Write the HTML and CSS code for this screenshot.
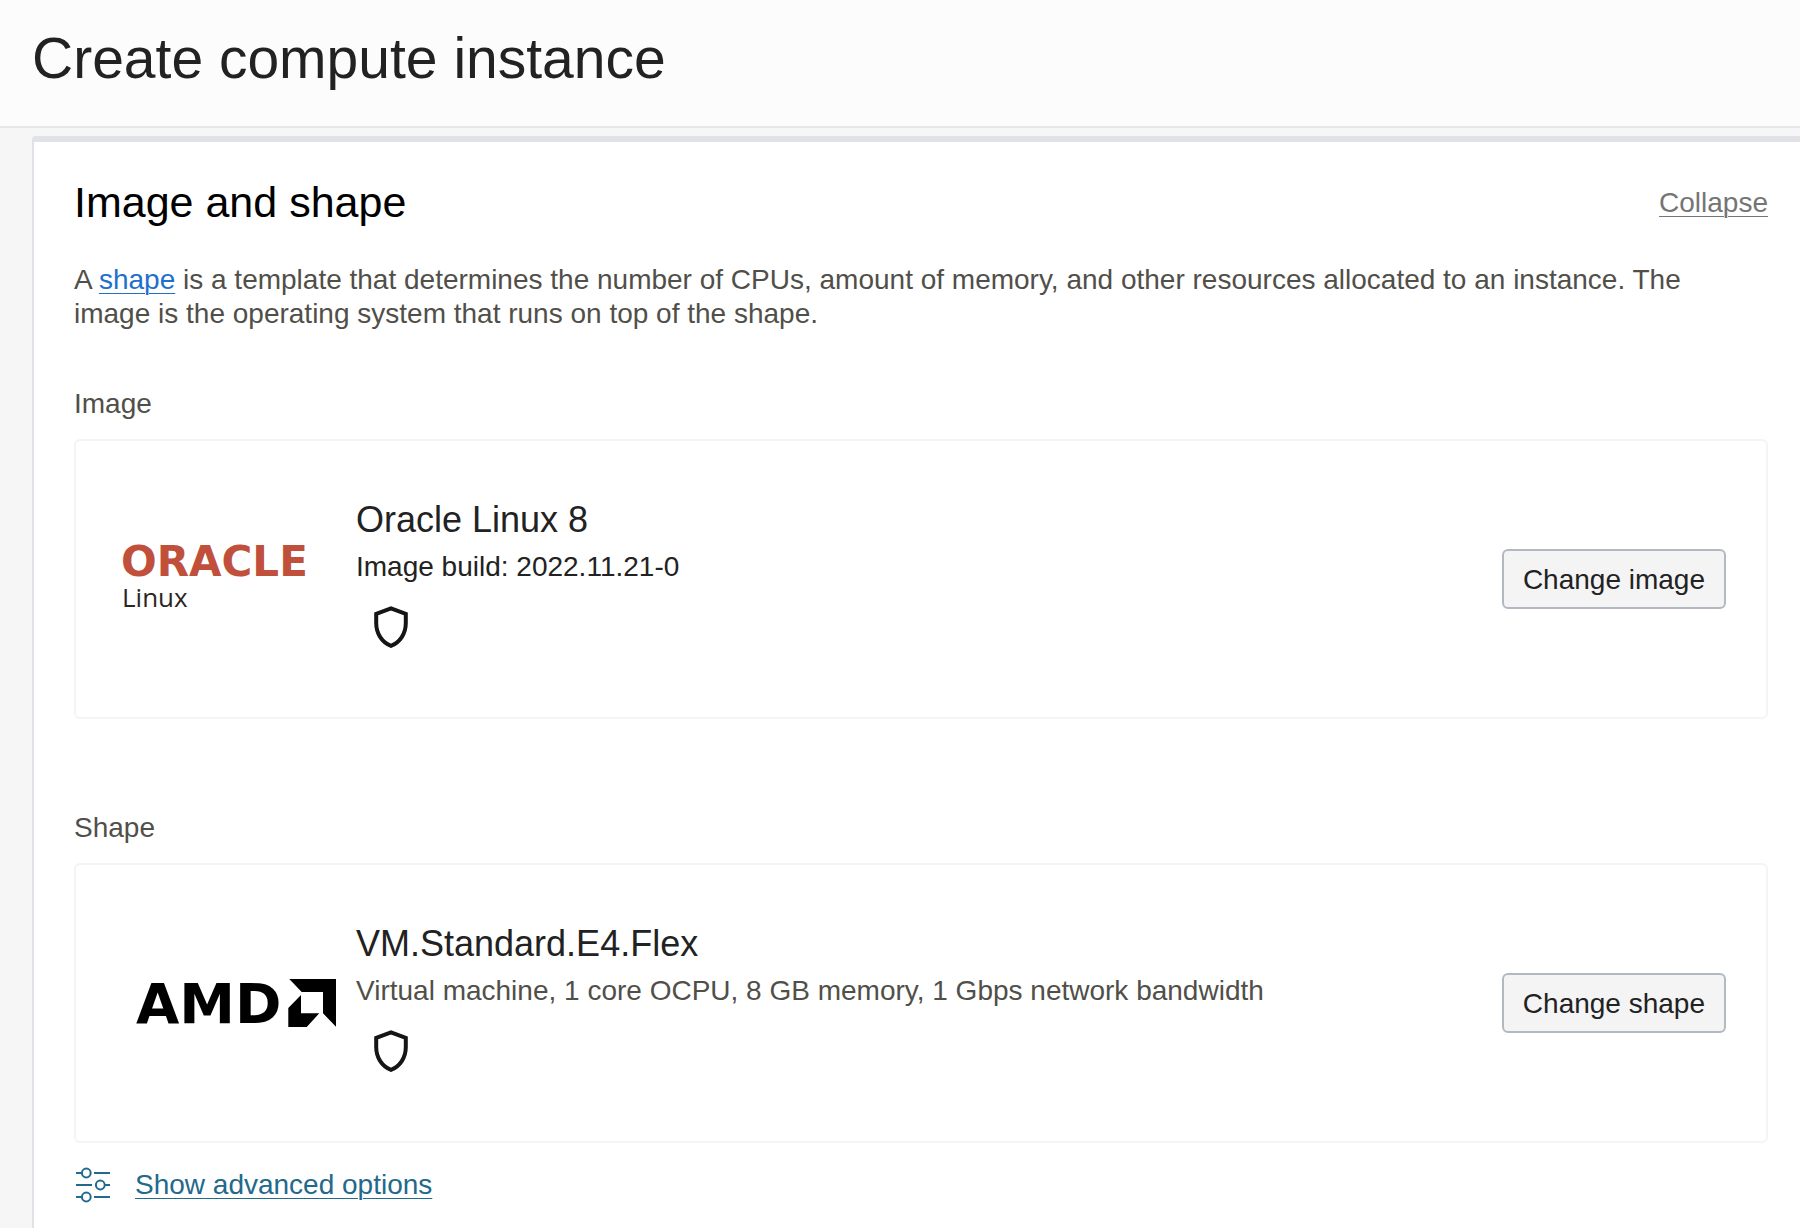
FILE: index.html
```html
<!DOCTYPE html>
<html lang="en">
<head>
<meta charset="utf-8">
<meta name="viewport" content="width=device-width, initial-scale=1">
<title>Create compute instance</title>
<link rel="stylesheet" href="styles.css">
</head>
<body>
<header class="page-header">
  <h1 class="page-title">Create compute instance</h1>
</header>
<main class="page-body">
  <section class="panel">
    <div class="panel-head">
      <h2 class="panel-title">Image and shape</h2>
      <a class="collapse-link" href="#">Collapse</a>
    </div>
    <p class="panel-text">A <a class="text-link" href="#">shape</a> is a template that determines the number of CPUs, amount of memory, and other resources allocated to an instance. The image is the operating system that runs on top of the shape.</p>

    <section class="choice">
      <h3 class="choice-label">Image</h3>
      <div class="card">
        <div class="card-logo">
          <svg class="oracle-logo" viewBox="0 0 190 58" role="img" aria-label="Oracle Linux">
            <text class="oracle-word" x="-2" y="26">ORACLE</text>
            <text class="linux-word" x="-1" y="57">Linux</text>
          </svg>
        </div>
        <div class="card-details">
          <h4 class="card-title">Oracle Linux 8</h4>
          <p class="card-text card-text-strong">Image build: 2022.11.21-0</p>
          <svg class="shield" viewBox="0 0 36 42" aria-hidden="true"><path d="M18 2.3 32.8 7.8V17C32.8 27.5 27 36.5 18 39.8 9 36.5 3.2 27.5 3.2 17V7.8Z"/></svg>
        </div>
        <button class="card-button" type="button">Change image</button>
      </div>
    </section>

    <section class="choice choice-next">
      <h3 class="choice-label">Shape</h3>
      <div class="card">
        <div class="card-logo">
          <svg class="amd-logo" viewBox="0 0 214 48" role="img" aria-label="AMD">
            <text class="amd-word" x="13" y="44">AMD</text>
            <path d="M166.3 0H213V47.7L200 34.3V13H178.7ZM165.3 29 178 16V34.3H196.3L183.7 48H165.3Z"/>
          </svg>
        </div>
        <div class="card-details">
          <h4 class="card-title">VM.Standard.E4.Flex</h4>
          <p class="card-text">Virtual machine, 1 core OCPU, 8 GB memory, 1 Gbps network bandwidth</p>
          <svg class="shield" viewBox="0 0 36 42" aria-hidden="true"><path d="M18 2.3 32.8 7.8V17C32.8 27.5 27 36.5 18 39.8 9 36.5 3.2 27.5 3.2 17V7.8Z"/></svg>
        </div>
        <button class="card-button" type="button">Change shape</button>
      </div>
    </section>

    <div class="advanced">
      <svg class="sliders" viewBox="0 0 36 38" aria-hidden="true">
        <path d="M2 7H8M20 7H36M2 19H18M31 19H36M2 31H8M20 31H36"/>
        <circle cx="12.3" cy="7" r="4.4"/><circle cx="26.3" cy="19" r="4.4"/><circle cx="12.3" cy="31" r="4.4"/>
      </svg>
      <a class="advanced-link" href="#">Show advanced options</a>
    </div>
  </section>
</main>
</body>
</html>
```
FILE: styles.css
```css
* { box-sizing: border-box; }

body {
  margin: 0;
  min-height: 100vh;
  display: flex;
  flex-direction: column;
  background: #f6f6f6;
  color: #222;
  font: 28px/34px "Liberation Sans", Arial, sans-serif;
}

h1, h2, h3, h4, p { margin: 0; font-weight: 400; }

.page-header {
  padding: 26px 32px 36px;
  border-bottom: 2px solid #e6e6e6;
  background: #fcfcfc;
}
.page-title { font-size: 57px; line-height: 64px; }

.page-body {
  flex: 1;
  display: flex;
  padding: 8px 0 0 32px;
}

.panel {
  flex: 1;
  min-width: 0;
  padding: 35px 32px 26px 40px;
  border-top: 6px solid #e1e2e7;
  border-left: 2px solid #e1e2e7;
  border-top-left-radius: 4px;
  background: #fff;
}
.panel-head {
  display: flex;
  align-items: center;
  justify-content: space-between;
}
.panel-title { color: #000; font-size: 43px; line-height: 50px; }
.collapse-link { padding-top: 2px; color: #757575; }
.panel-text {
  margin-top: 36px;
  padding-right: 40px;
  color: #514f49;
}
.text-link { color: #1f70cc; }
a { text-decoration-thickness: 1px; text-underline-offset: 4px; }

.choice { margin-top: 56px; }
.choice-next { margin-top: 92px; }
.choice-label { color: #514f49; font-size: 28px; }

.card {
  display: grid;
  grid-template-columns: 233px 1fr auto;
  align-items: center;
  min-height: 280px;
  margin-top: 18px;
  padding: 0 40px 0 47px;
  border: 2px solid #f4f4f4;
  border-radius: 6px;
}
.card-logo svg { display: block; overflow: visible; }
.oracle-logo { width: 190px; height: 58px; }
.oracle-word { fill: #c0503c; font: 700 42px "DejaVu Sans", sans-serif; }
.linux-word { fill: #2a2624; font: 26px "Open Sans", sans-serif; }
.amd-logo { width: 214px; height: 48px; }
.amd-word { font: 700 56px "DejaVu Sans", sans-serif; }

.card-details { align-self: start; padding-top: 57px; }
.card-title { font-size: 36px; line-height: 44px; }
.card-text { margin-top: 8px; color: #514f49; }
.card-text-strong { color: #222; }
.shield {
  display: block;
  width: 36px;
  height: 42px;
  margin: 22px 0 0 17px;
  fill: none;
  stroke: #161513;
  stroke-width: 4;
}

.card-button {
  height: 60px;
  padding: 2px 19px 0;
  border: 2px solid #b3b9c2;
  border-radius: 6px;
  background: #f4f4f4;
  color: #222;
  font: inherit;
}

.advanced {
  display: flex;
  align-items: center;
  gap: 25px;
  margin-top: 23px;
}
.sliders {
  width: 36px;
  height: 38px;
  fill: none;
  stroke: #22698c;
  stroke-width: 2;
}
.advanced-link { color: #22698c; }
```
